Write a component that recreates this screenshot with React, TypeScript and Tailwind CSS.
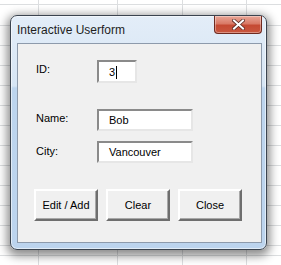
import React from "react";

function Grid() {
  const xs = [38.5, 117.5, 182.5, 246.5];
  const ys = [4.5, 25.5, 45.5, 65.5, 85.5, 105.5, 125.5, 145.5, 165.5, 185.5, 205.5, 225.5, 245.5, 255.5];
  return (
    <svg className="absolute inset-0" width="281" height="265" viewBox="0 0 281 265">
      {xs.map((x) => (
        <line key={"x" + x} x1={x} y1={0} x2={x} y2={265} stroke="#dcdee0" strokeWidth="1" />
      ))}
      {ys.map((y) => (
        <line key={"y" + y} x1={0} y1={y} x2={281} y2={y} stroke="#dcdee0" strokeWidth="1" />
      ))}
    </svg>
  );
}

function Field({ value, w, h, cursor }: { value: string; w: string; h: string; cursor?: boolean }) {
  return (
    <div
      className={`${w} ${h} flex items-center bg-white border-2 border-t-[#8a8a8a] border-l-[#8a8a8a] border-b-[#e6e6e6] border-r-[#e6e6e6] pl-[10px] pt-[1px] text-[11px] leading-[13px] text-black`}
    >
      <span>{value}</span>
      {cursor && <span className="inline-block w-[1px] h-[13px] bg-black ml-[1px]" />}
    </div>
  );
}

function Btn({ label }: { label: string }) {
  return (
    <div className="w-[64px] h-[32px] flex items-center justify-center bg-[#f0f0f0] border-2 border-t-[#ffffff] border-l-[#ffffff] border-b-[#6e6e6e] border-r-[#6e6e6e] shadow-[inset_-1px_-1px_0_#a8a8a8] text-[11px] text-black">
      {label}
    </div>
  );
}

export default function App() {
  return (
    <div
      className="relative w-[281px] h-[265px] overflow-hidden bg-white"
      style={{ fontFamily: '"Liberation Sans", Arial, sans-serif' }}
    >
      <Grid />
      <div className="relative pt-[15px] pl-[10px]">
        <div className="w-[257px] h-[235px] rounded-[7px] border border-[#3b4450] bg-[linear-gradient(to_bottom,#e3edf8_0px,#d6e5f4_70px,#bdd5ee_72px,#bcd4ee_100%)] shadow-[0_3px_10px_3px_rgba(0,0,0,0.45),inset_0_0_0_1px_rgba(255,255,255,0.55)] flex flex-col pl-[6px] pr-[4px] pb-[6px]">
          <div className="h-[27px] flex items-start justify-between">
            <div className="pt-[7px] text-[12px] leading-[15px] text-[#1e1e1e]">Interactive Userform</div>
            <div className="w-[48px] h-[18px] rounded-b-[4px] border border-t-0 border-[#6e2a20] bg-[linear-gradient(to_bottom,#e9a697_0%,#d97a66_45%,#c54a33_55%,#c9573f_100%)] flex items-center justify-center shadow-[inset_0_0_0_1px_rgba(255,255,255,0.35)]">
              <svg width="13" height="11" viewBox="0 0 13 11">
                <path d="M2 1.5 L11 9.5 M11 1.5 L2 9.5" stroke="#5a2a22" strokeWidth="3.6" strokeLinecap="square" />
                <path d="M2 1.5 L11 9.5 M11 1.5 L2 9.5" stroke="#ffffff" strokeWidth="2" strokeLinecap="square" />
              </svg>
            </div>
          </div>
          <div className="flex-1 border border-[#8d9aab] bg-[#f0f0f0] pl-[16px] pt-[16px] flex flex-col text-[11px] leading-[13px] text-black">
            <div className="flex items-start">
              <div className="w-[61px] ml-[2px] pt-[3px]">ID:</div>
              <Field value="3" w="w-[40px]" h="h-[23px]" cursor />
            </div>
            <div className="flex items-start mt-[26px]">
              <div className="w-[61px] ml-[2px] pt-[3px]">Name:</div>
              <Field value="Bob" w="w-[96px]" h="h-[22px]" />
            </div>
            <div className="flex items-start mt-[10px]">
              <div className="w-[61px] ml-[2px] pt-[4px]">City:</div>
              <Field value="Vancouver" w="w-[96px]" h="h-[22px]" />
            </div>
            <div className="flex gap-[8px] mt-[26px]">
              <Btn label="Edit / Add" />
              <Btn label="Clear" />
              <Btn label="Close" />
            </div>
          </div>
        </div>
      </div>
    </div>
  );
}
